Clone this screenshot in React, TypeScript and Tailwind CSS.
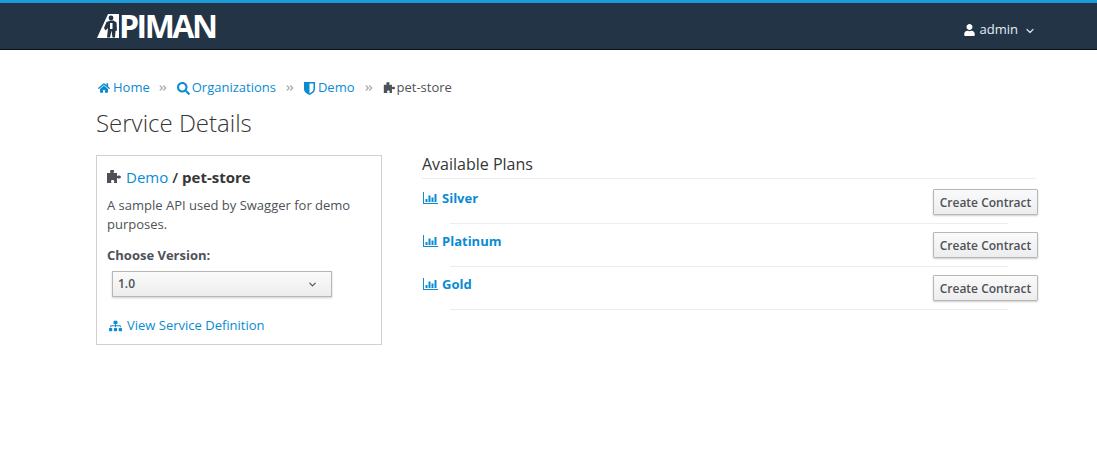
import { FaHome, FaSearch, FaSitemap, FaUser, FaAngleDoubleRight } from 'react-icons/fa'
import { ChevronDown } from 'lucide-react'

const PLANS = ['Silver', 'Platinum', 'Gold']

function PuzzleIcon({ className }: { className?: string }) {
  return (
    <svg viewBox="0 0 16 14" className={className} fill="currentColor">
      <path d="M5 0h3v1.6c0 .5-.5.8-.5 1.400H11v3c.6 0 .9-.6 1.500-.6 1 0 2.500.5 2.500 1.500s-1.500 1.600-2.500 1.600c-.6 0-.9-.6-1.500-.6V13H7.800c0-.6.5-1 .5-1.600 0-.9-.8-1.400-1.700-1.400S5 10.500 5 11.400c0 .6.500 1 .5 1.600H1V3h3.500C4.500 2.400 4 2.100 4 1.600 4 .8 4.300 0 5 0z" />
    </svg>
  )
}

function ShieldIcon({ className }: { className?: string }) {
  return (
    <svg viewBox="0 0 11 13" className={className} fill="currentColor">
      <path fillRule="evenodd" d="M0 0h11v7c0 3-3 4.800-5.500 6C3 11.800 0 10 0 7zM5.500 1.500v9.900C7.500 10.300 9.500 9 9.500 7V1.500z" />
    </svg>
  )
}

function BarsIcon({ className }: { className?: string }) {
  return (
    <svg viewBox="0 0 15 12" className={className} fill="currentColor">
      <path d="M0 0h1v11h14v1H0z" />
      <path d="M2.500 7h2v3h-2zM5.500 3.500h2V10h-2zM8.500 5.500h2V10h-2zM11.500 2h2v8h-2z" />
    </svg>
  )
}

function Logo() {
  return (
    <div className="flex items-end h-[24px] text-white">
      <svg viewBox="0 0 24 24" className="w-[24px] h-[24px] -mr-[2px]">
        <path d="M11 0h11v24H0z" fill="currentColor" />
        <circle cx="14" cy="4" r="2.400" fill="#243447" />
        <path d="M9.500 8l4-1.500h3l3 2 .5 8-1.500.5-.5 6.500h-2.500l-1-7-1.500 7H10l1-9.500-2.500 2.500L7 14z" fill="#243447" />
        <path d="M13 9h2.500v6H13z" fill="currentColor" />
      </svg>
      <span className="text-[32px] leading-[24px] font-bold tracking-[-2.500px] font-['Open_Sans',sans-serif]">PIMAN</span>
    </div>
  )
}

function Sep() {
  return <FaAngleDoubleRight className="w-[8px] h-[10px] text-[#b4afab] mx-[10px] shrink-0" />
}

function CreateButton() {
  return (
    <button className="h-[26px] w-[105px] -mr-[2px] pt-[2px] shrink-0 border border-[#b7b7b7] rounded-[1px] bg-gradient-to-b from-[#fafafa] to-[#ededed] text-[12px] font-semibold text-[#4d5258] shadow-[0_1px_2px_rgba(0,0,0,0.2)]">
      Create Contract
    </button>
  )
}

export default function App() {
  return (
    <div className="h-[456px] overflow-hidden bg-white font-['Open_Sans',sans-serif] text-[#363636]">
      {/* Top bar */}
      <header className="h-[50px] bg-[#243447] border-t-[3px] border-t-[#1d9ad8] border-b border-b-[#0b0f14] flex items-center justify-between pl-[97px] pr-[61px]">
        <Logo />
        <div className="flex items-center pt-[7px] text-white text-[13px]">
          <FaUser className="w-[11px] h-[12px] mr-[5px]" />
          <span className="text-[#e6edf3]">admin</span>
          <ChevronDown className="w-[12px] h-[12px] ml-[6px] mt-[2px] text-[#d6dde4]" strokeWidth={2.5} />
        </div>
      </header>

      <main className="pl-[96px] pr-[61px]">
        {/* Breadcrumb */}
        <nav className="flex items-center h-[18px] mt-[29px] ml-[2px] text-[13px] text-[#0a8bd2]">
          <FaHome className="w-[12px] h-[12px] mr-[3px]" />
          <span className="-mr-[1px]">Home</span>
          <Sep />
          <FaSearch className="w-[13px] h-[13px] mr-[2px]" />
          <span>Organizations</span>
          <Sep />
          <ShieldIcon className="w-[11px] h-[13px] mr-[3px]" />
          <span>Demo</span>
          <Sep />
          <PuzzleIcon className="w-[13px] h-[12px] mr-[1px] text-[#4d5258]" />
          <span className="text-[#4d5258]">pet-store</span>
        </nav>

        <h1 className="mt-[10px] text-[24px] leading-[32px] font-light text-[#363636]">Service Details</h1>

        <div className="flex mt-[16px]">
          {/* Service card */}
          <section className="w-[286px] h-[190px] shrink-0 border border-[#d1d1d1] px-[9px]">
            <div className="flex items-center h-[20px] mt-[11px] text-[15px]">
              <PuzzleIcon className="w-[16px] h-[14px] mr-[4px] text-[#4d5258]" />
              <span className="text-[#0a8bd2]">Demo</span>
              <span className="font-semibold ml-[4px] mr-[4px]">/</span>
              <span className="font-bold">pet-store</span>
            </div>
            <p className="mt-[9px] ml-[1px] text-[13px] leading-[19px] text-[#4d5258]">
              A sample API used by Swagger for demo purposes.
            </p>
            <div className="mt-[12px] ml-[1px] text-[13px] leading-[19px] font-bold text-[#4d5258]">Choose Version:</div>
            <div className="mt-[6px] ml-[6px] w-[220px] h-[26px] flex items-center justify-between pl-[5px] pr-[13px] border border-[#b7b7b7] bg-gradient-to-b from-[#fafafa] to-[#ededed] text-[12px] font-semibold text-[#4d5258] shadow-[0_1px_2px_rgba(0,0,0,0.2)]">
              <span>1.0</span>
              <ChevronDown className="w-[11px] h-[11px] mt-[1px] text-[#4d5258]" strokeWidth={2.5} />
            </div>
            <div className="flex items-center mt-[19px] ml-[3px] text-[13px] text-[#0a8bd2]">
              <FaSitemap className="w-[13px] h-[12px] mr-[5px]" />
              <span>View Service Definition</span>
            </div>
          </section>

          {/* Plans */}
          <section className="flex-1 ml-[40px]">
            <h2 className="text-[16px] leading-[18px] text-[#363636] pb-[5px] border-b border-[#ededed]">Available Plans</h2>
            <div className="pt-[2px]">
              {PLANS.map((plan) => (
                <div key={plan} className="h-[43px] pt-[8px]">
                  <div className="flex justify-between">
                    <div className="flex items-start h-[20px] text-[13px] font-bold text-[#0a8bd2]">
                      <BarsIcon className="w-[15px] h-[12px] mt-[3px] ml-[1px] mr-[4px]" />
                      <span className="leading-[19px]">{plan}</span>
                    </div>
                    <CreateButton />
                  </div>
                  <div className="mt-[8px] mx-[28px] border-b border-[#ededed]" />
                </div>
              ))}
            </div>
          </section>
        </div>
      </main>
    </div>
  )
}
